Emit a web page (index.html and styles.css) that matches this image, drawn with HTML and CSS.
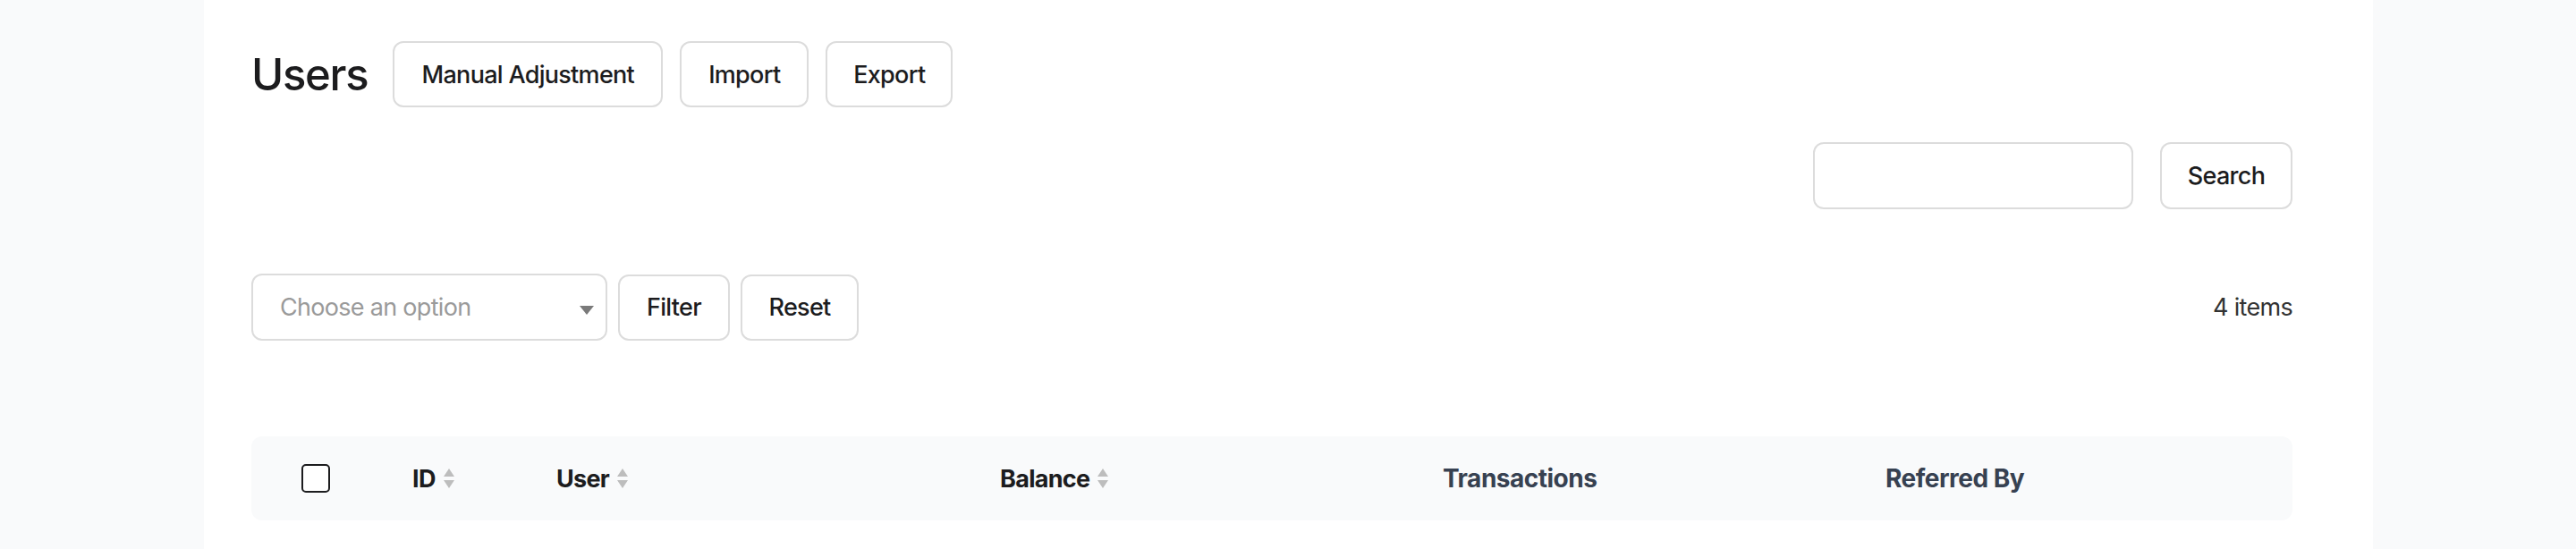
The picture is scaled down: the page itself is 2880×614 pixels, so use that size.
FILE: index.html
```html
<!DOCTYPE html>
<html lang="en">
<head>
  <meta charset="UTF-8"/>
  <title>Users</title>
  <link rel="stylesheet" href="styles.css">
</head>
<body>
  <div class="panel">
    <div class="titlebar">
      <h1>Users</h1>
      <button class="btn btn-manual">Manual Adjustment</button>
      <button class="btn btn-import">Import</button>
      <button class="btn btn-export">Export</button>
    </div>

    <form class="searchbar" onsubmit="event.preventDefault();">
      <input type="text" class="search-input"/>
      <button class="btn btn-search">Search</button>
    </form>

    <div class="filterbar">
      <div class="filters">
        <div class="select">
          <span class="placeholder">Choose an option</span>
          <span class="caret"></span>
        </div>
        <button class="btn btn-filter">Filter</button>
        <button class="btn btn-reset">Reset</button>
      </div>
      <div class="count">4 items</div>
    </div>

    <div class="thead">
      <div class="th th-check"><span class="checkbox"></span></div>
      <div class="th sortable">ID<span class="sort"><i class="up"></i><i class="down"></i></span></div>
      <div class="th sortable">User<span class="sort"><i class="up"></i><i class="down"></i></span></div>
      <div class="th sortable">Balance<span class="sort"><i class="up"></i><i class="down"></i></span></div>
      <div class="th plain">Transactions</div>
      <div class="th plain">Referred By</div>
    </div>
  </div>
</body>
</html>
```

FILE: styles.css
```css
body { margin:0; background:#f9fafb; font-family:Inter,'Liberation Sans',Arial,sans-serif; color:#1c1c1e; letter-spacing:-0.7px; }
.panel { margin-left:228px; width:2425px; min-height:614px; background:#fff; padding:46px 90px 0 53px; box-sizing:border-box; }

.titlebar { display:flex; align-items:center; gap:19px; }
h1 { margin:0 9px 0 0; font-size:49px; font-weight:500; letter-spacing:-1.3px; color:#1c1c1e; }

.btn { height:74px; padding:0; display:flex; align-items:center; justify-content:center; font-family:inherit; font-size:27px; font-weight:500; letter-spacing:-0.7px; color:#1c1c1e; background:#fff; border:2px solid #dcdcdc; border-radius:12px; cursor:pointer; }
.btn-manual { width:302px; }
.btn-import { width:144px; }
.btn-export { width:142px; }

.searchbar { display:flex; justify-content:flex-end; gap:30px; margin-top:39px; }
.search-input { width:358px; height:75px; box-sizing:border-box; border:2px solid #dcdcdc; border-radius:12px; font-size:27px; padding:0 20px; }
.btn-search { width:148px; height:75px; }

.filterbar { display:flex; justify-content:space-between; align-items:center; margin-top:72px; }
.filters { display:flex; align-items:center; gap:12px; }
.select { width:398px; height:75px; box-sizing:border-box; border:2px solid #dcdcdc; border-radius:12px; display:flex; align-items:center; justify-content:space-between; padding:0 13px 0 30px; }
.placeholder { font-size:27px; color:#9a9a9a; }
.caret { width:0; height:0; border-left:8px solid transparent; border-right:8px solid transparent; border-top:10px solid #7a7a7a; margin-top:6px; }
.btn-filter { width:125px; }
.btn-reset { width:132px; }
.count { font-size:27px; color:#333; }

.thead { display:grid; grid-template-columns:180px 161px 496px 495px 495px 1fr; align-items:center; height:94px; margin-top:107px; background:#f9fafb; border-radius:12px; }
.th { font-size:27px; font-weight:700; display:flex; align-items:center; }
.th-check { padding-left:56px; }
.checkbox { width:28px; height:28px; border:2px solid #1c1c1e; border-radius:5px; background:#fff; }
.sortable { color:#1c1c1e; }
.plain { color:#374151; font-size:28px; letter-spacing:-0.5px; }
.sort { display:flex; flex-direction:column; gap:4px; margin-left:9px; }
.sort i { width:0; height:0; border-left:6px solid transparent; border-right:6px solid transparent; }
.sort .up { border-bottom:9px solid #bdbdbd; }
.sort .down { border-top:9px solid #bdbdbd; }
```
